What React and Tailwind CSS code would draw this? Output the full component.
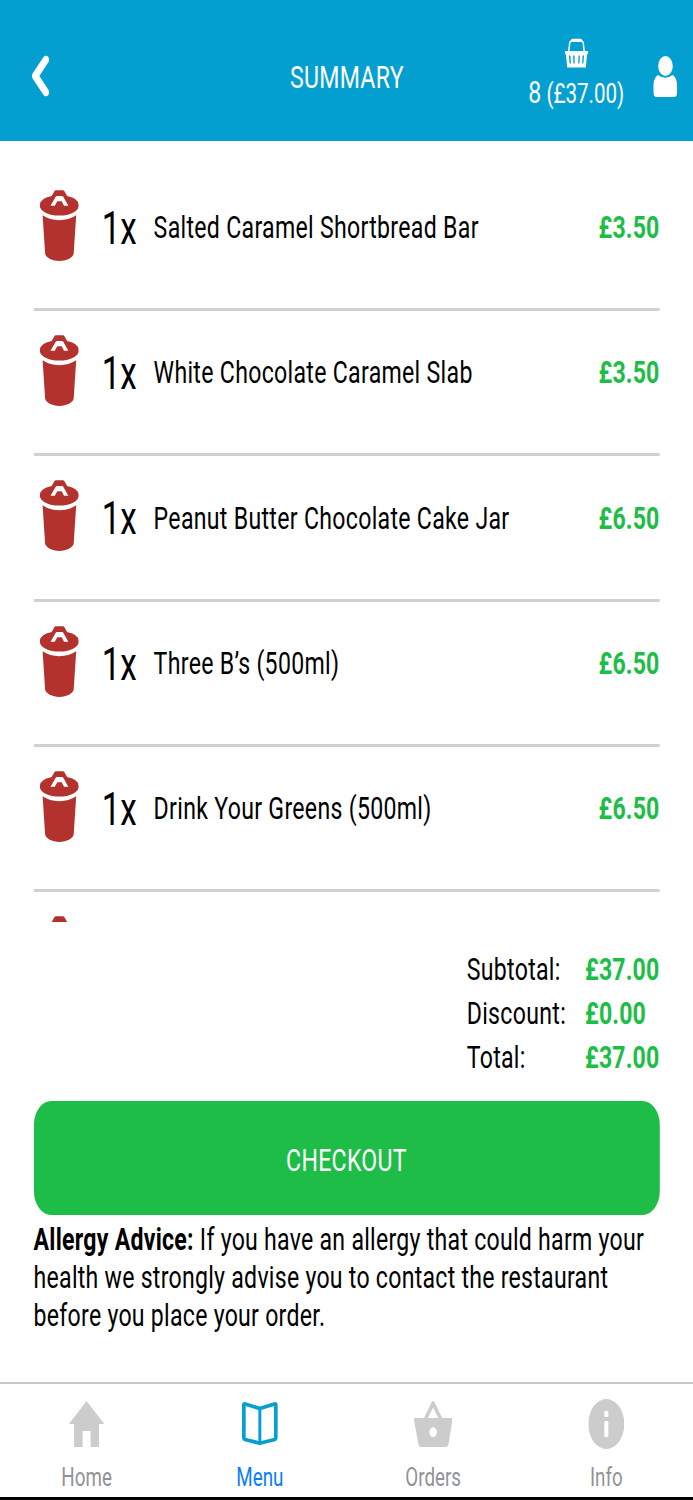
import React from "react";

// The screen is laid out 960px wide and condensed horizontally to fit 693px.
const items = [
  { name: "Salted Caramel Shortbread Bar", price: "£3.50" },
  { name: "White Chocolate Caramel Slab", price: "£3.50" },
  { name: "Peanut Butter Chocolate Cake Jar", price: "£6.50" },
  { name: "Three B’s (500ml)", price: "£6.50" },
  { name: "Drink Your Greens (500ml)", price: "£6.50" },
];

const totals = [
  { label: "Subtotal:", value: "£37.00" },
  { label: "Discount:", value: "£0.00" },
  { label: "Total:", value: "£37.00" },
];

function TrashIcon() {
  return (
    <svg viewBox="0 0 39.2 71" preserveAspectRatio="none" className="h-[71px] w-[54.3px] shrink-0" fill="#b3322d">
      <path d="M12 6 14.8 1Q15.2.2 16.2.2H23.2Q24.2.2 24.6 1L27.4 6Q39.2 8.4 39.2 15.2C39.2 21.5 30 25.6 19.6 25.6S0 21.5 0 15.2Q0 8.4 12 6Z" />
      <path d="M10.8 15.7 16 6.7Q16.4 6 17.2 6H22.4Q23.2 6 23.6 6.7L28.6 15.7H24.3L22 11.2H17.6L15.1 15.7Z" fill="#fff" />
      <path d="M2.9 25.3Q10 30.2 19.6 30.2T36.5 25.3L34 63.6C33.4 67.5 27 71 19.7 71S6 67.5 5.4 63.6Z" />
    </svg>
  );
}

function HomeIcon() {
  return (
    <svg viewBox="0 0 36 50" preserveAspectRatio="none" className="h-[50px] w-[49.9px]" fill="#ccc">
      <path d="M18 2 35.8 25H30.5V48H22V32H14V48H5.5V25H.3Z" />
    </svg>
  );
}

function MenuIcon() {
  return (
    <svg viewBox="0 0 36 50" preserveAspectRatio="none" className="h-[50px] w-[49.9px]" fill="none" stroke="#069fd0" strokeLinejoin="round">
      <path d="M2 6Q2 4.6 3.3 5L18 9.6 32.7 5Q34 4.6 34 6V38.5Q34 40 32.8 40.5L18 44.2 3.2 40.5Q2 40 2 38.5Z" strokeWidth="3.7" />
      <path d="M18 10V43" strokeWidth="3" />
    </svg>
  );
}

function OrdersIcon() {
  return (
    <svg viewBox="0 0 39 50" preserveAspectRatio="none" className="h-[50px] w-[54px]" fill="#ccc">
      <path fillRule="evenodd" d="M1.5 19H10.4L18.2 2.8Q19.4 1 20.7 2.8L28.5 19H37.4Q39 19 38.8 21L35 44.5Q34.4 48 31.8 48H7.8Q5.2 48 4.6 44.5L.4 21Q.2 19 1.5 19ZM14.3 19H24.7L19.5 8.5ZM19.5 28.2C17.3 28.2 15.8 30.4 15.8 33.2S17.3 38.2 19.5 38.2 23.2 36 23.2 33.2 21.7 28.2 19.5 28.2Z" />
    </svg>
  );
}

function InfoIcon() {
  return (
    <svg viewBox="0 0 36 50" preserveAspectRatio="none" className="h-[50px] w-[49.9px]" fill="#ccc">
      <ellipse cx="18" cy="25" rx="18" ry="25" />
      <rect x="16" y="12" width="4" height="6" rx="1" fill="#fff" />
      <rect x="16" y="22" width="4" height="16" rx="1" fill="#fff" />
    </svg>
  );
}

const tabs = [
  { label: "Home", Icon: HomeIcon, color: "text-[#929297]" },
  { label: "Menu", Icon: MenuIcon, color: "text-[#087dff]" },
  { label: "Orders", Icon: OrdersIcon, color: "text-[#929297]" },
  { label: "Info", Icon: InfoIcon, color: "text-[#929297]" },
];

function Header() {
  return (
    <header className="grid h-[141px] grid-cols-[1fr_auto_1fr] bg-[#049fd1] text-white">
      <div className="pl-[44px] pt-[55px]">
        <svg viewBox="0 0 18 42" preserveAspectRatio="none" className="h-[42px] w-[25px]">
          <path d="M.8 18.6 11.6 2.2C13 .2 15 .3 16.3 1.7 17.7 3.2 17.8 5.3 16.6 7.2L7.6 21 16.6 34.8C17.8 36.7 17.7 38.8 16.3 40.3 15 41.7 13 41.8 11.6 39.8L.8 23.4Q-.6 21 .8 18.6Z" fill="#fff" />
        </svg>
      </div>
      <h1 className="pl-px pt-[57px] text-[32px] leading-[40px] tracking-[0.4px]">SUMMARY</h1>
      <div className="flex justify-end pr-[22px]">
        <div className="mr-[40px] flex flex-col items-center pt-[38px]">
          <svg viewBox="0 0 24 30" preserveAspectRatio="none" className="ml-[2px] h-[30px] w-[33.2px]">
            <path d="M4.3 13 5.2 5Q5.7 2.6 8 2.4H16Q18.3 2.6 18.8 5L19.7 13" fill="none" stroke="#fff" strokeWidth="1.5" />
            <path d="M8 2.4H16" stroke="#fff" strokeWidth="3.2" strokeLinecap="round" />
            <path fillRule="evenodd" fill="#fff" d="M.3 13H23.7V16.2H22.6L21.3 29.6H2.7L1.4 16.2H.3ZM4.4 17.6 5.1 25.6H6.4L5.9 17.6ZM8.6 17.6 9 25.6H10.3L10 17.6ZM14 17.6 13.7 25.6H15L15.4 17.6ZM18.1 17.6 17.6 25.6H18.9L19.6 17.6Z" />
          </svg>
          <p className="mt-[5px] whitespace-nowrap pl-px text-[28.5px] leading-[38px]">
            <span className="text-[32px]">8</span> (£37.00)
          </p>
        </div>
        <svg viewBox="0 0 24 41" preserveAspectRatio="none" className="mt-[56px] h-[41px] w-[33.2px]" fill="#fff">
          <ellipse cx="12.2" cy="10" rx="7.3" ry="10" />
          <path d="M4.9 18.9Q12 24.5 19.3 18.9C22.5 20.5 24 25 24 31V36Q24 41 20.5 41H3.5Q0 41 0 36V31C0 25 1.7 20.5 4.9 18.9Z" />
        </svg>
      </div>
    </header>
  );
}

export default function App() {
  return (
    <div className="h-[1500px] w-[693px] overflow-hidden bg-white">
      <div className="flex h-[1500px] w-[960px] origin-top-left scale-x-[0.721875] flex-col bg-white font-['Roboto',sans-serif] text-black">
        <Header />

        <main className="flex h-[1241px] flex-col px-[46.5px]">
          <ul className="h-[781px] shrink-0 overflow-hidden pt-[24.6px]">
            {items.map((item) => (
              <li key={item.name} className="flex h-[145.35px] items-start border-b-[3px] border-[#d0d0d0] pl-[8px] pt-[24px]">
                <TrashIcon />
                <div className="flex h-[76px] flex-1 items-center">
                  <span className="w-[72px] pl-[32px] pt-px text-[46px]">1x</span>
                  <span className="flex-1 pb-px pl-[32px] text-[32px] tracking-[0.42px]">{item.name}</span>
                  <span className="pb-px text-[32px] font-bold tracking-[0.2px] text-[#1dbd47]">{item.price}</span>
                </div>
              </li>
            ))}
            <li className="pl-[8px] pt-[24px]">
              <TrashIcon />
            </li>
          </ul>

          <dl className="mt-[24.5px] self-end text-[32px] leading-[44px]">
            {totals.map((t) => (
              <div key={t.label} className="flex">
                <dt className="w-[164px] tracking-[0.42px]">{t.label}</dt>
                <dd className="w-[103px] font-bold tracking-[0.2px] text-[#1dbd47]">{t.value}</dd>
              </div>
            ))}
          </dl>

          <button className="mt-[22.5px] h-[114px] shrink-0 rounded-[24px] bg-[#1dbd47] pt-[3px] text-[32px] tracking-[0.4px] text-white">
            CHECKOUT
          </button>
          <p className="mt-[5px] text-[32px] leading-[38px] tracking-[0.36px]">
            <b className="font-bold">Allergy Advice:</b> If you have an allergy that could harm your health we strongly advise you to contact the restaurant before you place your order.
          </p>
        </main>

        <nav className="grid h-[115px] grid-cols-4 border-t-2 border-[#c8c8c8]">
          {tabs.map(({ label, Icon, color }) => (
            <a key={label} className="flex flex-col items-center pt-[15px]">
              <Icon />
              <span className={`mt-[12px] text-[26px] leading-[32px] ${color}`}>{label}</span>
            </a>
          ))}
        </nav>
        <div className="h-[3px] bg-black" />
      </div>
    </div>
  );
}
